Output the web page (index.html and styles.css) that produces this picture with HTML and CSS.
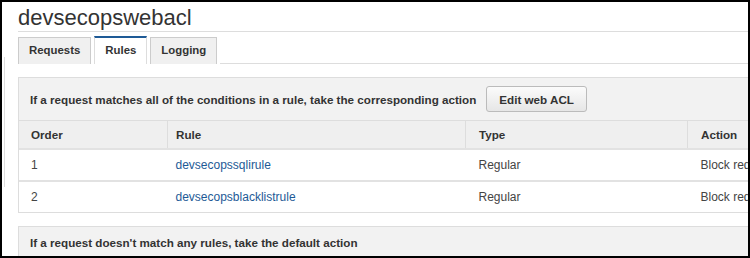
FILE: index.html
```html
<!DOCTYPE html>
<html>
<head>
    <title>devsecopswebacl</title>
    <link rel="stylesheet" href="styles.css">
</head>
<body>
    <div class="frame">
        <div class="page">
            <h1 class="acl-title">devsecopswebacl</h1>

            <div class="tabs">
                <div class="tab">Requests</div>
                <div class="tab active">Rules</div>
                <div class="tab">Logging</div>
                <div class="tab-fill"></div>
            </div>

            <div class="panel">
                <div class="panel-head">
                    <span>If a request matches all of the conditions in a rule, take the corresponding action</span>
                    <button class="btn">Edit web ACL</button>
                </div>
                <table class="rules">
                    <thead>
                        <tr>
                            <th class="col-order">Order</th>
                            <th class="col-rule">Rule</th>
                            <th class="col-type">Type</th>
                            <th class="col-action">Action</th>
                        </tr>
                    </thead>
                    <tbody>
                        <tr>
                            <td>1</td>
                            <td class="col-rule"><a href="#">devsecopssqlirule</a></td>
                            <td class="col-type">Regular</td>
                            <td class="col-action">Block requests</td>
                        </tr>
                        <tr>
                            <td>2</td>
                            <td class="col-rule"><a href="#">devsecopsblacklistrule</a></td>
                            <td class="col-type">Regular</td>
                            <td class="col-action">Block requests</td>
                        </tr>
                    </tbody>
                </table>
            </div>

            <div class="panel">
                <div class="panel-head">
                    <span>If a request doesn't match any rules, take the default action</span>
                </div>
            </div>
        </div>
    </div>
</body>
</html>
```

FILE: styles.css
```css
body {
    margin: 0;
    font-family: "Liberation Sans", Arial, sans-serif;
    font-size: 12px;
    color: #444;
    background-color: white;
}
.frame {
    width: 750px;
    height: 258px;
    box-sizing: border-box;
    border: 2px solid #000;
    overflow: hidden;
    position: relative;
}
/* faint edge of the scroll pane on the left */
.frame::before {
    content: "";
    position: absolute;
    left: 2px;
    top: 55px;
    width: 1px;
    height: 130px;
    background-color: #ddd;
}
.page {
    padding-left: 16px;
    width: 1000px;
}
.acl-title {
    margin: 0;
    padding-top: 3px;
    height: 26px;
    font-size: 22px;
    font-weight: normal;
    color: #333;
    border-bottom: 1px solid #ddd;
    line-height: 26px;
}
.tabs {
    display: flex;
    gap: 3px;
    margin-top: 4px;
    height: 28px;
}
.tab {
    padding: 0 10px;
    line-height: 25px;
    margin-top: 1px;
    font-size: 11.4px;
    font-weight: bold;
    color: #333;
    background-color: #f0f0f0;
    border: 1px solid #ccc;
    border-bottom: none;
}
.tab.active {
    margin-top: 0;
    background-color: white;
    border-top: 2px solid #1e5a96;
    border-left-color: #ddd;
    border-right-color: #ddd;
}
.tab-fill {
    flex: 1;
    border-bottom: 1px solid #ddd;
}
.panel {
    margin-top: 13px;
    border: 1px solid #ddd;
}
.panel-head {
    display: flex;
    align-items: center;
    gap: 10px;
    min-height: 14px;
    padding: 8px 11px;
    background-color: #f2f2f2;
    font-size: 11.65px;
    font-weight: bold;
    color: #333;
}
.btn {
    font-family: inherit;
    font-size: 11.65px;
    font-weight: bold;
    color: #333;
    height: 26px;
    padding: 0 12px;
    border: 1px solid #bbb;
    border-radius: 3px;
    background: linear-gradient(#fbfbfb, #e6e6e6);
}
.rules {
    border-collapse: collapse;
    table-layout: fixed;
    width: 900px;
}
.rules th, .rules td {
    text-align: left;
    padding: 0 12px;
    height: 30px;
    border-top: 2px solid #e2e2e2;
    white-space: nowrap;
    overflow: hidden;
}
.rules th {
    height: 27px;
    font-size: 11.65px;
    background-color: #efefef;
    color: #333;
    border-top: 1px solid #ddd;
    border-left: 1px solid #ddd;
}
.rules th:first-child {
    border-left: none;
}
.rules th.col-order { width: 124px; }
.rules th.col-rule { width: 277px; }
.rules th.col-type { width: 196px; }
.rules .col-rule { padding-left: 8px; }
.rules .col-type,
.rules .col-action { padding-left: 13px; }
.rules a {
    color: #1e5a96;
    text-decoration: none;
}
```
